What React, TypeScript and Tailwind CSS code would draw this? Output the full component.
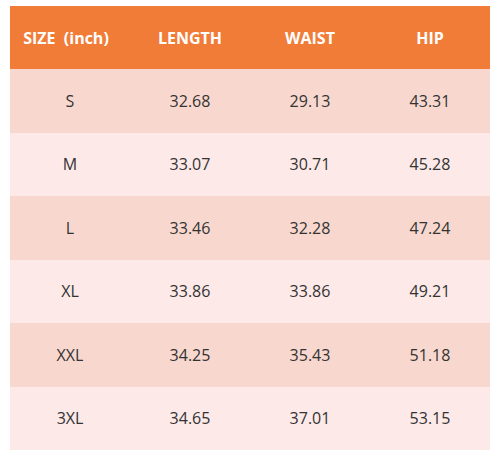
const rows = [
  ["S", "32.68", "29.13", "43.31"],
  ["M", "33.07", "30.71", "45.28"],
  ["L", "33.46", "32.28", "47.24"],
  ["XL", "33.86", "33.86", "49.21"],
  ["XXL", "34.25", "35.43", "51.18"],
  ["3XL", "34.65", "37.01", "53.15"],
];

export default function App() {
  return (
    <div className="w-[500px] h-[460px] bg-white pt-[6px] px-[10px] font-['Open_Sans',sans-serif]">
      <div className="grid grid-cols-4 h-[63px] bg-[#f17c37] text-white font-bold text-[16px] items-center">
        <div className="text-center pr-[8px] whitespace-pre">SIZE  (inch)</div>
        <div className="text-center">LENGTH</div>
        <div className="text-center">WAIST</div>
        <div className="text-center">HIP</div>
      </div>
      {rows.map((row, i) => (
        <div
          key={i}
          className={
            "grid grid-cols-4 h-[63.5px] items-center text-[16px] text-[#333]" +
            (i % 2 === 0 ? " bg-[#f8d8ce]" : " bg-[#fce9e8]")
          }
        >
          {row.map((cell, j) => (
            <div key={j} className="text-center">
              {cell}
            </div>
          ))}
        </div>
      ))}
    </div>
  );
}
